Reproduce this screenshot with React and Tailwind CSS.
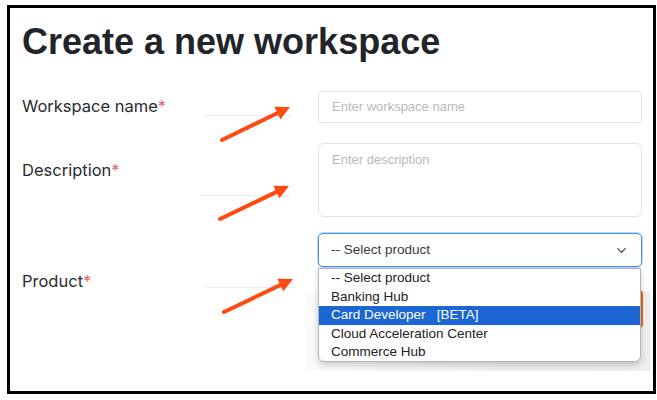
import React from "react";
import { ChevronDown } from "lucide-react";

function Arrow({ x1, y1, x2, y2 }) {
  const dx = x2 - x1, dy = y2 - y1;
  const len = Math.hypot(dx, dy);
  const ux = dx / len, uy = dy / len;
  const hl = 14, hw = 7;
  const bx = x2 - ux * hl, by = y2 - uy * hl;
  const p1 = `${bx - uy * hw},${by + ux * hw}`;
  const p2 = `${bx + uy * hw},${by - ux * hw}`;
  return (
    <g>
      <line x1={x1} y1={y1} x2={bx + ux * 2} y2={by + uy * 2} stroke="#ff4a12" strokeWidth="4" strokeLinecap="round" />
      <polygon points={`${x2},${y2} ${p1} ${p2}`} fill="#ff4a12" />
    </g>
  );
}

export default function App() {
  const label = "text-[16.5px] leading-6 text-[#2a2b2e]";
  return (
    <div className="w-[657px] h-[400px] bg-white overflow-hidden relative" style={{ fontFamily: "Inter, 'Liberation Sans', sans-serif" }}>
      <div className="ml-[7px] mt-[5px] w-[649px] h-[389px] border-[3px] border-black relative">
        <div className="pl-[12px] pt-[12px]">
          <h1 className="text-[36px] leading-[44px] font-bold text-[#222429] font-['Liberation_Sans',sans-serif]">
            Create a new workspace
          </h1>
          <div className="flex flex-col mt-[27px]">
            <div className="flex">
              <div className={`w-[296px] mt-[3px] ${label}`}>
                Workspace name<span className="text-[#e56a6a]">*</span>
              </div>
              <div className="w-[324px] h-[32px] border border-[#e2e3e6] rounded-[5px] flex items-center pl-[13px] text-[13px] text-[#b8b9bc] font-['Liberation_Sans',sans-serif]">
                Enter workspace name
              </div>
            </div>
            <div className="flex mt-[20px]">
              <div className={`w-[296px] mt-[15px] ${label}`}>
                Description<span className="text-[#e56a6a]">*</span>
              </div>
              <div className="w-[324px] h-[74px] border border-[#e2e3e6] rounded-[5px] pl-[13px] pt-[8px] text-[13px] leading-[16px] text-[#b8b9bc] font-['Liberation_Sans',sans-serif]">
                Enter description
              </div>
            </div>
            <div className="flex mt-[16px]">
              <div className={`w-[296px] mt-[36px] ${label}`}>
                Product<span className="text-[#e56a6a]">*</span>
              </div>
              <div className="w-[324px] h-[34px] border-[1.5px] border-[#4d94dc] ring-1 ring-[#b9d6f3] rounded-[5px] flex items-center justify-between pl-[12px] pr-[12px] text-[13.5px] text-[#3a3a3a] font-['Liberation_Sans',sans-serif]">
                <span>-- Select product</span>
                <ChevronDown size={15} strokeWidth={2} className="text-[#444]" />
              </div>
            </div>
          </div>
        </div>

        {/* faint leftover lines */}
        <div className="absolute left-[193px] top-[107px] w-[90px] h-px bg-[#efefef]" />
        <div className="absolute left-[190px] top-[187px] w-[90px] h-px bg-[#efefef]" />
        <div className="absolute left-[195px] top-[279px] w-[90px] h-px bg-[#efefef]" />

        {/* shadow area behind dropdown */}
        <div className="absolute left-[295px] top-[284px] w-[345px] h-[79px] bg-gradient-to-r from-[#fafafa] via-[#efefef] to-[#eeeeee]" />
        {/* orange button behind dropdown */}
        <div className="absolute left-[520px] top-[282px] w-[113px] h-[38px] bg-[#e8661c] rounded-[4px]" />

        {/* dropdown list */}
        <div className="absolute left-[308px] top-[260px] w-[323px] h-[94px] bg-white border border-[#b5b5b5] rounded-b-[6px] shadow-[0_3px_6px_rgba(0,0,0,0.18)] overflow-hidden text-[13.5px] leading-[18.6px] text-[#222] font-['Liberation_Sans',sans-serif]">
          <div className="pl-[12px]">-- Select product</div>
          <div className="pl-[12px]">Banking Hub</div>
          <div className="pl-[12px] bg-[#1c66d3] text-white whitespace-pre">Card Developer   [BETA]</div>
          <div className="pl-[12px]">Cloud Acceleration Center</div>
          <div className="pl-[12px]">Commerce Hub</div>
        </div>
      </div>

      <svg className="absolute left-0 top-0 pointer-events-none" width="657" height="400">
        <Arrow x1={222} y1={140} x2={290} y2={107} />
        <Arrow x1={220} y1={219} x2={289} y2={186} />
        <Arrow x1={224} y1={312} x2={293} y2={279} />
      </svg>
    </div>
  );
}
